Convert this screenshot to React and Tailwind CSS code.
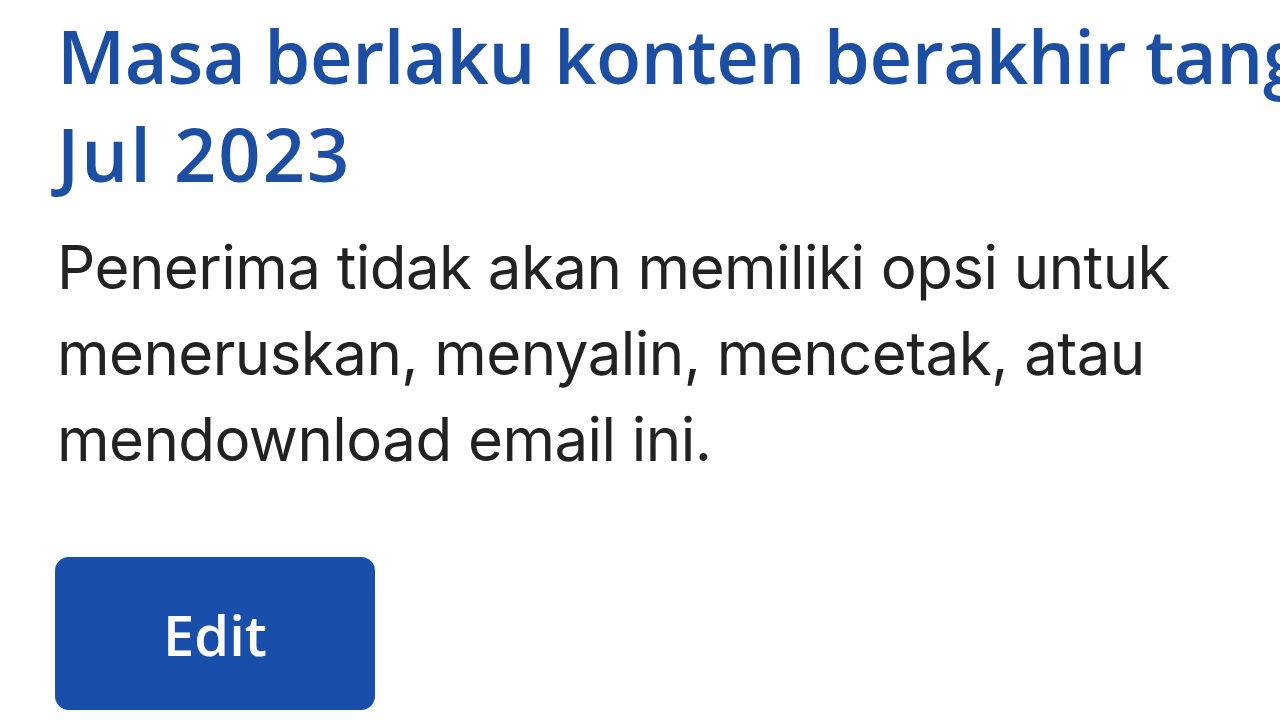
export default function App() {
  return (
    <div className="flex h-[720px] w-[1280px] flex-col items-start overflow-hidden bg-white pl-[57px] pt-[7px] font-['Open_Sans',sans-serif]">
      {/* Title */}
      <h1 className="w-[1600px] whitespace-nowrap text-[74px] font-semibold leading-[98px] tracking-[-0.4px] text-[#1c4fa3]">
        Masa berlaku konten berakhir tanggal 20
        <br />
        <span className="tracking-[2px]">Jul 2023</span>
      </h1>

      {/* Description */}
      <p className="mt-[21px] whitespace-nowrap font-['Inter',sans-serif] text-[60px] leading-[86px] tracking-[-0.55px] text-[#222222]">
        Penerima tidak akan memiliki opsi untuk
        <br />
        meneruskan, menyalin, mencetak, atau
        <br />
        mendownload email ini.
      </p>

      {/* Action */}
      <button className="-ml-[2px] mt-[75px] flex h-[153px] w-[320px] items-center justify-center rounded-[14px] bg-[#1a4eab] text-[56px] font-semibold text-white">
        Edit
      </button>
    </div>
  )
}
